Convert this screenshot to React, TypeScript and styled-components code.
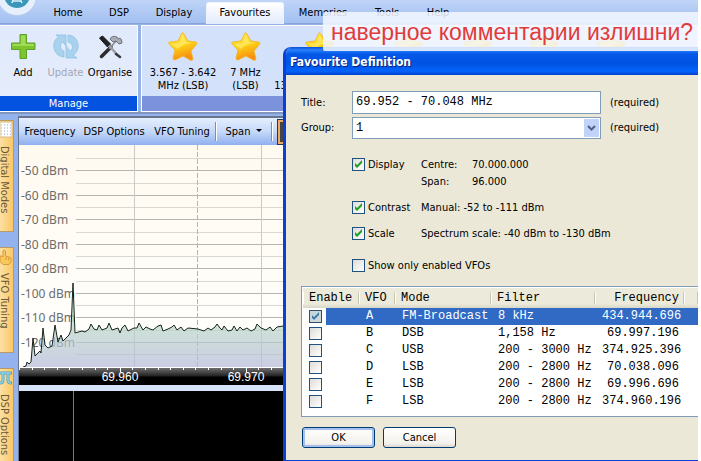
import React from 'react';
import styled, { createGlobalStyle, css } from 'styled-components';

const UI = '"DejaVu Sans Condensed", "DejaVu Sans", "Noto Sans", sans-serif';
const MONO = '"Liberation Mono", "DejaVu Sans Mono", monospace';

const GlobalStyle = createGlobalStyle`
  * { box-sizing: border-box; }
  html, body { margin: 0; background: #fff; overflow: hidden; }
  body { font: 11px/14px ${UI}; color: #000; }
  button, input, select { font: inherit; color: inherit; margin: 0; }
  button { cursor: default; }
`;

const Screen = styled.div`
  position: relative;
  height: 100vh;
  margin-right: 3px;
  overflow: hidden;
  display: flex;
  flex-direction: column;
  background: #94b3ee;
`;

/* ---------- ribbon ---------- */

const TabBar = styled.nav`
  flex: none;
  display: flex;
  align-items: flex-end;
  height: 24px;
  background: linear-gradient(#bfd4f7, #a3c0f1);
  border-bottom: 1px solid #88a6dc;
`;

const Logo = styled.svg`
  display: block;
  width: 40px;
  height: 24px;
  flex: none;
`;

const RibbonTab = styled.button<{ $width: number; $active?: boolean }>`
  flex: none;
  width: ${p => p.$width}px;
  height: 22px;
  margin-bottom: -1px;
  padding: 0 0 2px;
  border: 1px solid transparent;
  border-bottom: 0;
  border-radius: 3px 3px 0 0;
  background: none;
  text-align: center;
  ${p => p.$active && css`
    background: linear-gradient(#fff, #e2ebfc);
    border-color: #eef4ff;
  `}
`;

const Ribbon = styled.div`
  flex: none;
  display: flex;
  gap: 3px;
  height: 90px;
  padding-top: 1px;
  background: #96b3e6;
  border-bottom: 2px solid #8196bd;
`;

const Group = styled.section<{ $grow?: boolean }>`
  display: flex;
  flex-direction: column;
  flex: ${p => (p.$grow ? '1 0 auto' : '0 0 138px')};
  border: 1px solid #fff;
  border-left-width: ${p => (p.$grow ? 1 : 0)}px;
  background: ${p => (p.$grow ? '#d3e1fb' : 'linear-gradient(#e0eafc, #e6edfb)')};
`;

const GroupItems = styled.div`
  flex: 1;
  display: flex;
  align-items: flex-start;
  padding-top: 5px;
`;

const GroupTitle = styled.div<{ $muted?: boolean }>`
  height: 15px;
  line-height: 16px;
  text-align: center;
  color: #fff;
  background: ${p => (p.$muted ? '#7c92dc' : '#0352e0')};
`;

const Tool = styled.button<{ $width: number }>`
  flex: none;
  width: ${p => p.$width}px;
  padding: 0;
  border: 0;
  background: none;
  display: flex;
  flex-direction: column;
  align-items: center;
  gap: 5px;
  line-height: 13px;
  white-space: pre;
  &:disabled { color: #a3a7b3; }
  svg { display: block; width: 32px; height: 30px; }
`;

/* ---------- workspace ---------- */

const Workspace = styled.div`
  flex: 1;
  min-height: 0;
  display: flex;
  gap: 4px;
  padding-top: 2px;
`;

const SideBar = styled.aside`
  flex: none;
  width: 14px;
  padding-top: 4px;
  display: flex;
  flex-direction: column;
  gap: 15px;
`;

const SideTab = styled.button<{ $height: number }>`
  flex: none;
  height: ${p => p.$height}px;
  padding: 0;
  border: 1px solid #b89b62;
  border-left: 0;
  background: linear-gradient(90deg, #fbe0a4, #fcc765);
  color: #6a5737;
  display: flex;
  flex-direction: column;
  align-items: flex-start;
  gap: 8px;
  svg { display: block; width: 13px; height: 17px; flex: none; }
  span {
    writing-mode: vertical-rl;
    line-height: 9px;
    white-space: nowrap;
  }
`;

const Receiver = styled.main`
  flex: 1;
  min-width: 0;
  display: flex;
  flex-direction: column;
  border: solid #68758d;
  border-width: 2px 0 0 1px;
  background: #000;
`;

const ToolBar = styled.div`
  flex: none;
  display: flex;
  align-items: center;
  height: 27px;
  padding-left: 2px;
  background: linear-gradient(#e4eefe, #c6d9f9 50%, #8fafef);
`;

const BarButton = styled.button<{ $width: number }>`
  flex: none;
  width: ${p => p.$width}px;
  padding: 0;
  border: 0;
  background: none;
  white-space: nowrap;
  svg { width: 6px; height: 3px; margin-left: 6px; vertical-align: 3px; }
`;

const Separator = styled.i`
  flex: none;
  width: 2px;
  height: 19px;
  border-left: 1px solid #6d8fd0;
  border-right: 1px solid #fff;
`;

const Toggle = styled.button`
  flex: none;
  width: 24px;
  height: 26px;
  margin-left: 4px;
  border: 1px solid #26335a;
  background: #444;
  box-shadow: inset 0 0 0 2px #f0a868;
`;

const Plot = styled.svg`
  flex: none;
  display: block;
  width: 679px;
  height: 240px;
`;

const Splitter = styled.div`
  flex: none;
  height: 6px;
  background: #d5e2f8;
`;

const Waterfall = styled.div`
  flex: 1;
  padding-left: 54px;
  &::before {
    content: '';
    display: block;
    width: 1px;
    height: 100%;
    background: #3f82ff;
  }
`;

/* ---------- floating dialog ---------- */

const Dialog = styled.section`
  position: absolute;
  inset: 47px 0 0 283px;
  display: flex;
  flex-direction: column;
  background: #ebe8d8;
  border: solid #0a3fd8;
  border-width: 0 0 1px 3px;
  border-radius: 8px 0 0 0;
  overflow: hidden;
`;

const TitleBar = styled.h1`
  flex: none;
  margin: 0 0 0 -3px;
  height: 28px;
  padding-left: 7px;
  border-radius: 7px 0 0 0;
  background: linear-gradient(#0a50d8, #2a80fb 3px, #0458e8 7px, #0053e2 17px, #0464fc 24px, #0340cb);
  color: #fff;
  font: bold 12px/31px ${UI};
  text-shadow: 1px 1px #0a1f80;
`;

const Form = styled.form`
  flex: 1;
  display: flex;
  flex-direction: column;
  padding: 16px 0 0 15px;
`;

const Field = styled.div`
  display: grid;
  grid-template-columns: 51px 249px auto;
  align-items: center;
  margin-bottom: 3px;
  > span { padding-left: 9px; }
`;

const TextBox = styled.input`
  width: 100%;
  height: 23px;
  padding: 0 3px 2px;
  border: 1px solid #7f9db9;
  background: #fff;
  font: 12px/16px ${MONO};
`;

const Combo = styled.div`
  display: grid;
  align-items: center;
  > * { grid-area: 1 / 1; }
  svg { justify-self: end; width: 15px; height: 18px; margin-right: 2px; pointer-events: none; }
`;

const Select = styled.select`
  appearance: none;
  width: 100%;
  height: 22px;
  padding: 0 3px;
  border: 1px solid #7f9db9;
  border-radius: 0;
  background: #fff;
  font: 12px/16px ${MONO};
`;

const checkBox = css`
  appearance: none;
  flex: none;
  display: block;
  width: 13px;
  height: 13px;
  border: 1px solid #1d5281;
  background: linear-gradient(135deg, #dddcd6, #fff);
  &:checked {
    background: url("data:image/svg+xml,%3Csvg xmlns='http://www.w3.org/2000/svg' viewBox='0 0 11 11'%3E%3Cpath d='M2 4v3l2 2 5-5V1L4 6z' fill='%2321a121'/%3E%3C/svg%3E"), linear-gradient(135deg, #dddcd6, #fff);
  }
`;

const Options = styled.div`
  display: grid;
  grid-template-columns: 69px 51px auto;
  margin: 14px 0 0 51px;
  line-height: 17px;
`;

const Check = styled.label<{ $wide?: boolean }>`
  display: flex;
  align-items: center;
  gap: 3px;
  white-space: nowrap;
  ${p => p.$wide && 'grid-column: 1 / -1;'}
  input { ${checkBox} }
`;

const Note = styled.span<{ $col?: number }>`
  ${p => (p.$col ? `grid-column: ${p.$col};` : 'grid-column: 2 / -1;')}
`;

const Gap = styled.i<{ $size: number }>`
  grid-column: 1 / -1;
  height: ${p => p.$size}px;
`;

const ListBox = styled.div`
  height: 131px;
  margin-top: 12px;
  padding: 1px 0 0 1px;
  border: solid #7f9db9;
  border-width: 1px 0 1px 1px;
  background: #fff;
  overflow: hidden;
`;

const Table = styled.table`
  width: 100%;
  table-layout: fixed;
  border-collapse: separate;
  border-spacing: 0;
  font: 12px/17px ${MONO};
  white-space: nowrap;
`;

const Head = styled.th<{ $right?: boolean }>`
  height: 20px;
  padding: 0 5px 0 6px;
  font-weight: normal;
  text-align: ${p => (p.$right ? 'right' : 'left')};
  background: linear-gradient(90deg, #fff, #fff) 0 4px / 1px 12px no-repeat,
    linear-gradient(90deg, #c8c5b2, #c8c5b2) 100% 4px / 1px 12px no-repeat,
    linear-gradient(#ebeadb 16px, #d9d6c5);
`;

const Row = styled.tr<{ $selected?: boolean }>`
  ${p => p.$selected && css`
    color: #fff;
    td { background: #316ac5; }
    td:first-child { background: linear-gradient(90deg, #fff 23px, #316ac5 23px); }
    input { filter: sepia(1) hue-rotate(170deg) saturate(2) brightness(.85); }
  `}
`;

const Cell = styled.td<{ $right?: boolean }>`
  height: 17px;
  padding: 0 5px 0 7px;
  text-align: ${p => (p.$right ? 'right' : 'left')};
  input { ${checkBox} margin-left: -1px; }
`;

const Actions = styled.div`
  display: flex;
  gap: 8px;
  margin-top: 10px;
  padding-left: 1px;
`;

const PushButton = styled.button<{ $primary?: boolean }>`
  width: 73px;
  height: 21px;
  padding: 0;
  border: 1px solid #003c74;
  border-radius: 3px;
  background: linear-gradient(#fff, #f3f2ec 80%, #dcd8cc);
  ${p => p.$primary && 'box-shadow: inset 0 0 0 2px #a5c0ee;'}
`;

const Caption = styled.p`
  position: absolute;
  inset: 12px 0 auto 323px;
  height: 39px;
  margin: 0;
  padding-left: 8px;
  border-radius: 2px 0 0 2px;
  background: rgba(243, 247, 255, 0.86);
  color: #e03c3c;
  font: 23px/40px "Liberation Sans", Arial, sans-serif;
  white-space: nowrap;
`;

/* ---------- icons ---------- */

const Star = () => (
  <svg viewBox="0 0 32 30" aria-hidden="true">
    <defs>
      <linearGradient id="gold" x1="0" y1="0" x2="0.3" y2="1">
        <stop offset="0" stopColor="#ffe95a" />
        <stop offset="0.55" stopColor="#ffd117" />
        <stop offset="1" stopColor="#f68f12" />
      </linearGradient>
    </defs>
    <path d="M15 2q1-1 2 1l4 7 8 1q2 1 0 3l-5 6 2 8q0 2-3 1l-7-4-8 4q-2 0-2-2l2-8-6-6q-1-2 1-2l8-1z" fill="url(#gold)" stroke="#f2b21f" strokeWidth="0.8" />
    <path d="M15.500 4l-3 8-8 1 6 5q6-6 15-6l-6-1z" fill="#fff07c" opacity="0.6" />
  </svg>
);

const PlusIcon = () => (
  <svg viewBox="0 0 32 30" aria-hidden="true">
    <path d="M13 3.500h6.500v8.500h8.500v6.500h-8.500v9H13v-9H4.500V12H13z" fill="#7cc52d" stroke="#5d9f2c" />
    <path d="M14 4.500h4.500V13H27v2H5.500v-2H14z" fill="#a9e060" opacity="0.8" />
  </svg>
);

const RefreshIcon = () => (
  <svg viewBox="0 0 32 30" aria-hidden="true">
    <g fill="#a9d2ee" stroke="#8fc0e2" strokeWidth="0.8">
      <path d="M14 26C2 25 1 9 9 6L6 4h10v11l-3-4c-4 2-3 8 1 9z" />
      <path d="M18 4c12 1 13 16 5 20l4 3H16V15l4 5c4-2 3-8-2-9z" />
    </g>
  </svg>
);

const ToolsIcon = () => (
  <svg viewBox="0 0 32 30" aria-hidden="true">
    <path d="M7.500 25.500L17 16" stroke="#2c2c2e" strokeWidth="3.500" strokeLinecap="round" />
    <path d="M15 18l8-9" stroke="#85888e" strokeWidth="1.500" />
    <path d="M16 8q2-4 7-2l1 2 2-1q2 1 2 5l-3 1-3-3-3 1z" fill="#a9adb5" stroke="#5b5e64" strokeWidth="0.8" />
    <path d="M5.500 7l3-2 8 8-3 3z" fill="#232325" stroke="#111" />
    <path d="M15 14.500l8 9" stroke="#9a9ea5" strokeWidth="2.500" />
    <path d="M22 23l4 3" stroke="#37393d" strokeWidth="2.500" strokeLinecap="round" />
  </svg>
);

const GridIcon = () => (
  <svg viewBox="0 0 13 17" aria-hidden="true">
    <path d="M0 1h12v15H0z" fill="#fff" stroke="#d5b983" />
    <path d="M1 4h10M1 7h10M1 10h10M1 13h10" stroke="#8ba6c8" strokeDasharray="1 2" />
  </svg>
);

const HandIcon = () => (
  <svg viewBox="0 0 13 17" aria-hidden="true">
    <path d="M0 8h2l1 1V3q1-2 2.500 0v5l5 1.500q1.500 1 .5 4l-2 3H3l-3-3z" fill="#fbc65c" stroke="#d69a3a" />
    <path d="M6 9v3M8.500 9.500v3" stroke="#d89b36" />
  </svg>
);

const PiIcon = () => (
  <svg viewBox="0 0 13 17" aria-hidden="true">
    <path d="M0 4h12M3 4v7q0 3-3 3M8 4v8q0 2 4 2" fill="none" stroke="#5a9fb8" strokeWidth="3" />
    <path d="M0 4h11M3 4v7q0 3-3 3M8 4v8q0 2 3 2" fill="none" stroke="#8bd3ea" strokeWidth="1.500" />
  </svg>
);

/* ---------- data ---------- */

const favourites = [
  { label: '3.567 - 3.642\nMHz (LSB)', width: 82 },
  { label: '7 MHz\n(LSB)', width: 43 },
  { label: ' \n13.5000 - 13.9000', width: 106 },
  { label: '', width: 72 },
  { label: '', width: 66 },
  { label: '', width: 66 },
  { label: '', width: 68 },
];

const vfos = [
  ['A', 'FM-Broadcast', '8 kHz', '434.944.696'],
  ['B', 'DSB', '1,158 Hz', '69.997.196'],
  ['C', 'USB', '200 - 3000 Hz', '374.925.396'],
  ['D', 'LSB', '200 - 2800 Hz', '70.038.096'],
  ['E', 'LSB', '200 - 2800 Hz', '69.996.696'],
  ['F', 'LSB', '200 - 2800 Hz', '374.960.196'],
];

const levels = [-50, -60, -70, -80, -90, -100, -110, -120];
const levelY = (i: number) => Math.round(25 + i * 24.5) + 0.5;

const trace =
  '4,222 7,221 8,217 10,219 12,217 14,193 16,211 18,209 21,206 22,208 24,183 26,200 29,203 33,201 36,180 39,197 42,190 44,196 47,193 50,190 52,185 54,138 56,188 63,186 66,187 70,184 72,179 75,184 78,185 80,180 83,185 88,183 90,178 93,185 99,183 101,188 103,183 106,180 109,186 115,183 118,183 120,178 124,185 127,182 131,184 134,185 139,181 142,180 144,186 149,184 153,182 155,180 158,185 162,182 165,186 169,183 179,184 185,186 189,183 192,185 196,182 198,179 201,183 203,185 205,181 209,186 213,185 215,181 218,186 221,182 224,185 228,183 232,186 236,184 238,179 242,183 247,185 251,182 254,186 258,182 264,181 300,184 679,184';

const Spectrum = () => (
  <Plot role="img" aria-label="Spectrum">
    <defs>
      <linearGradient id="paper" x1="0" y1="0" x2="0" y2="1">
        <stop offset="0" stopColor="#fffaf0" />
        <stop offset="1" stopColor="#fffffd" />
      </linearGradient>
      <linearGradient id="signal" x1="0" y1="0" x2="0" y2="1">
        <stop offset="0.4" stopColor="#b9dcc4" stopOpacity="0.7" />
        <stop offset="1" stopColor="#b5b8d8" stopOpacity="0.7" />
      </linearGradient>
      <linearGradient id="axis" x1="0" y1="0" x2="0" y2="1">
        <stop offset="0" stopColor="#777" />
        <stop offset="0.5" stopColor="#222" />
        <stop offset="0.55" stopColor="#000" />
      </linearGradient>
    </defs>
    <rect width="679" height="222" fill="url(#paper)" />
    {levels.map((v, i) => (
      <g key={v}>
        <path d={`M57 ${levelY(i) - 12}H679`} stroke="#d9d8d2" />
        <path d={`M57 ${levelY(i)}H679`} stroke="#b5b5b1" />
        <text x="2" y={levelY(i) + 4.5} fontFamily="Noto Sans, sans-serif" fontSize="12" fill="#6b6b6b">{v} dBm</text>
      </g>
    ))}
    <path d="M57 209.500H679" stroke="#d9d8d2" />
    <path d="M115.500 0V222M242.500 0V222" stroke="#cacac6" />
    <path d="M178.500 0V222" stroke="#b4b4b0" strokeDasharray="5 2" />
    <polygon points={`4,222 ${trace} 679,222`} fill="url(#signal)" />
    <polyline points={trace} fill="none" stroke="#16241c" strokeWidth="1" />
    <rect y="222" width="679" height="18" fill="url(#axis)" />
    <path d="M0 222.500H679" stroke="#fff" />
    {Array.from({ length: 54 }, (_, i) => (
      <path key={i} d={`M${Math.round(i * 12.6) + 0.5} 222v${i % 10 === 8 ? 5 : 3}`} stroke="#fff" />
    ))}
    <g fontFamily="Liberation Sans, sans-serif" fontSize="12" fill="#fff" textAnchor="middle">
      <text x="101" y="236">69.960</text>
      <text x="227" y="236">69.970</text>
    </g>
  </Plot>
);

export default function App() {
  return (
    <Screen>
      <GlobalStyle />
      <TabBar>
        <Logo viewBox="0 0 40 24" aria-hidden="true">
          <circle cx="17" cy="-3" r="19.500" fill="#e6effc" stroke="#b9cdf0" />
          <circle cx="17" cy="-4" r="13" fill="#3b97ba" />
          <path d="M14 -2l-2 6M19 -2l3 6M13 2h8M14 0h5" stroke="#d9f0f7" strokeWidth="1.500" />
        </Logo>
        <RibbonTab $width={56}>Home</RibbonTab>
        <RibbonTab $width={46}>DSP</RibbonTab>
        <RibbonTab $width={64}>Display</RibbonTab>
        <RibbonTab $width={78} $active>Favourites</RibbonTab>
        <RibbonTab $width={78}>Memories</RibbonTab>
        <RibbonTab $width={50}>Tools</RibbonTab>
        <RibbonTab $width={52}>Help</RibbonTab>
      </TabBar>
      <Ribbon>
        <Group>
          <GroupItems>
            <Tool $width={46}><PlusIcon />Add</Tool>
            <Tool $width={39} disabled><RefreshIcon />Update</Tool>
            <Tool $width={50}><ToolsIcon />Organise</Tool>
          </GroupItems>
          <GroupTitle>Manage</GroupTitle>
        </Group>
        <Group $grow>
          <GroupItems>
            {favourites.map((f, i) => (
              <Tool key={i} $width={f.width} aria-label={f.label.trim() || 'Favourite'}><Star />{f.label}</Tool>
            ))}
          </GroupItems>
          <GroupTitle $muted />
        </Group>
      </Ribbon>

      <Workspace>
        <SideBar>
          <SideTab $height={112}><GridIcon /><span>Digital Modes</span></SideTab>
          <SideTab $height={106}><HandIcon /><span>VFO Tuning</span></SideTab>
          <SideTab $height={106}><PiIcon /><span>DSP Options</span></SideTab>
        </SideBar>
        <Receiver>
          <ToolBar>
            <BarButton $width={58}>Frequency</BarButton>
            <BarButton $width={70}>DSP Options</BarButton>
            <BarButton $width={66}>VFO Tuning</BarButton>
            <Separator />
            <BarButton $width={54}>
              Span
              <svg viewBox="0 0 6 3" aria-hidden="true"><path d="M0 0h6L3 3z" /></svg>
            </BarButton>
            <Separator />
            <Toggle aria-label="Toggle view" />
          </ToolBar>
          <Spectrum />
          <Splitter />
          <Waterfall />
        </Receiver>
      </Workspace>

      <Dialog role="dialog" aria-labelledby="dialog-title">
        <TitleBar id="dialog-title">Favourite Definition</TitleBar>
        <Form onSubmit={e => e.preventDefault()}>
          <Field>
            <label htmlFor="title">Title:</label>
            <TextBox id="title" defaultValue="69.952 - 70.048 MHz" />
            <span>(required)</span>
          </Field>
          <Field>
            <label htmlFor="group">Group:</label>
            <Combo>
              <Select id="group" defaultValue="1"><option>1</option></Select>
              <svg viewBox="0 0 15 18" aria-hidden="true">
                <rect width="15" height="18" rx="1" fill="#c1d3fb" />
                <path d="M4 7l3.500 3.500L11 7" fill="none" stroke="#4d6185" strokeWidth="2" />
              </svg>
            </Combo>
            <span>(required)</span>
          </Field>

          <Options>
            <Check><input type="checkbox" defaultChecked />Display</Check>
            <Note $col={2}>Centre:</Note>
            <Note $col={3}>70.000.000</Note>
            <Note $col={2}>Span:</Note>
            <Note $col={3}>96.000</Note>
            <Gap $size={9} />
            <Check><input type="checkbox" defaultChecked />Contrast</Check>
            <Note>Manual: -52 to -111 dBm</Note>
            <Gap $size={9} />
            <Check><input type="checkbox" defaultChecked />Scale</Check>
            <Note>Spectrum scale: -40 dBm to -130 dBm</Note>
            <Gap $size={15} />
            <Check $wide><input type="checkbox" />Show only enabled VFOs</Check>
          </Options>

          <ListBox>
            <Table>
              <colgroup>
                <col style={{ width: 56 }} />
                <col style={{ width: 36 }} />
                <col style={{ width: 96 }} />
                <col style={{ width: 104 }} />
                <col style={{ width: 89 }} />
                <col />
              </colgroup>
              <thead>
                <tr>
                  <Head>Enable</Head>
                  <Head>VFO</Head>
                  <Head>Mode</Head>
                  <Head>Filter</Head>
                  <Head $right>Frequency</Head>
                  <Head />
                </tr>
              </thead>
              <tbody>
                {vfos.map(([name, mode, filter, freq], i) => (
                  <Row key={name} $selected={i === 0}>
                    <Cell><input type="checkbox" aria-label={`Enable VFO ${name}`} defaultChecked={i === 0} /></Cell>
                    <Cell>{name}</Cell>
                    <Cell>{mode}</Cell>
                    <Cell>{filter}</Cell>
                    <Cell $right>{freq}</Cell>
                    <Cell />
                  </Row>
                ))}
              </tbody>
            </Table>
          </ListBox>

          <Actions>
            <PushButton type="submit" $primary>OK</PushButton>
            <PushButton type="button">Cancel</PushButton>
          </Actions>
        </Form>
      </Dialog>

      <Caption>наверное комментарии излишни?</Caption>
    </Screen>
  );
}
